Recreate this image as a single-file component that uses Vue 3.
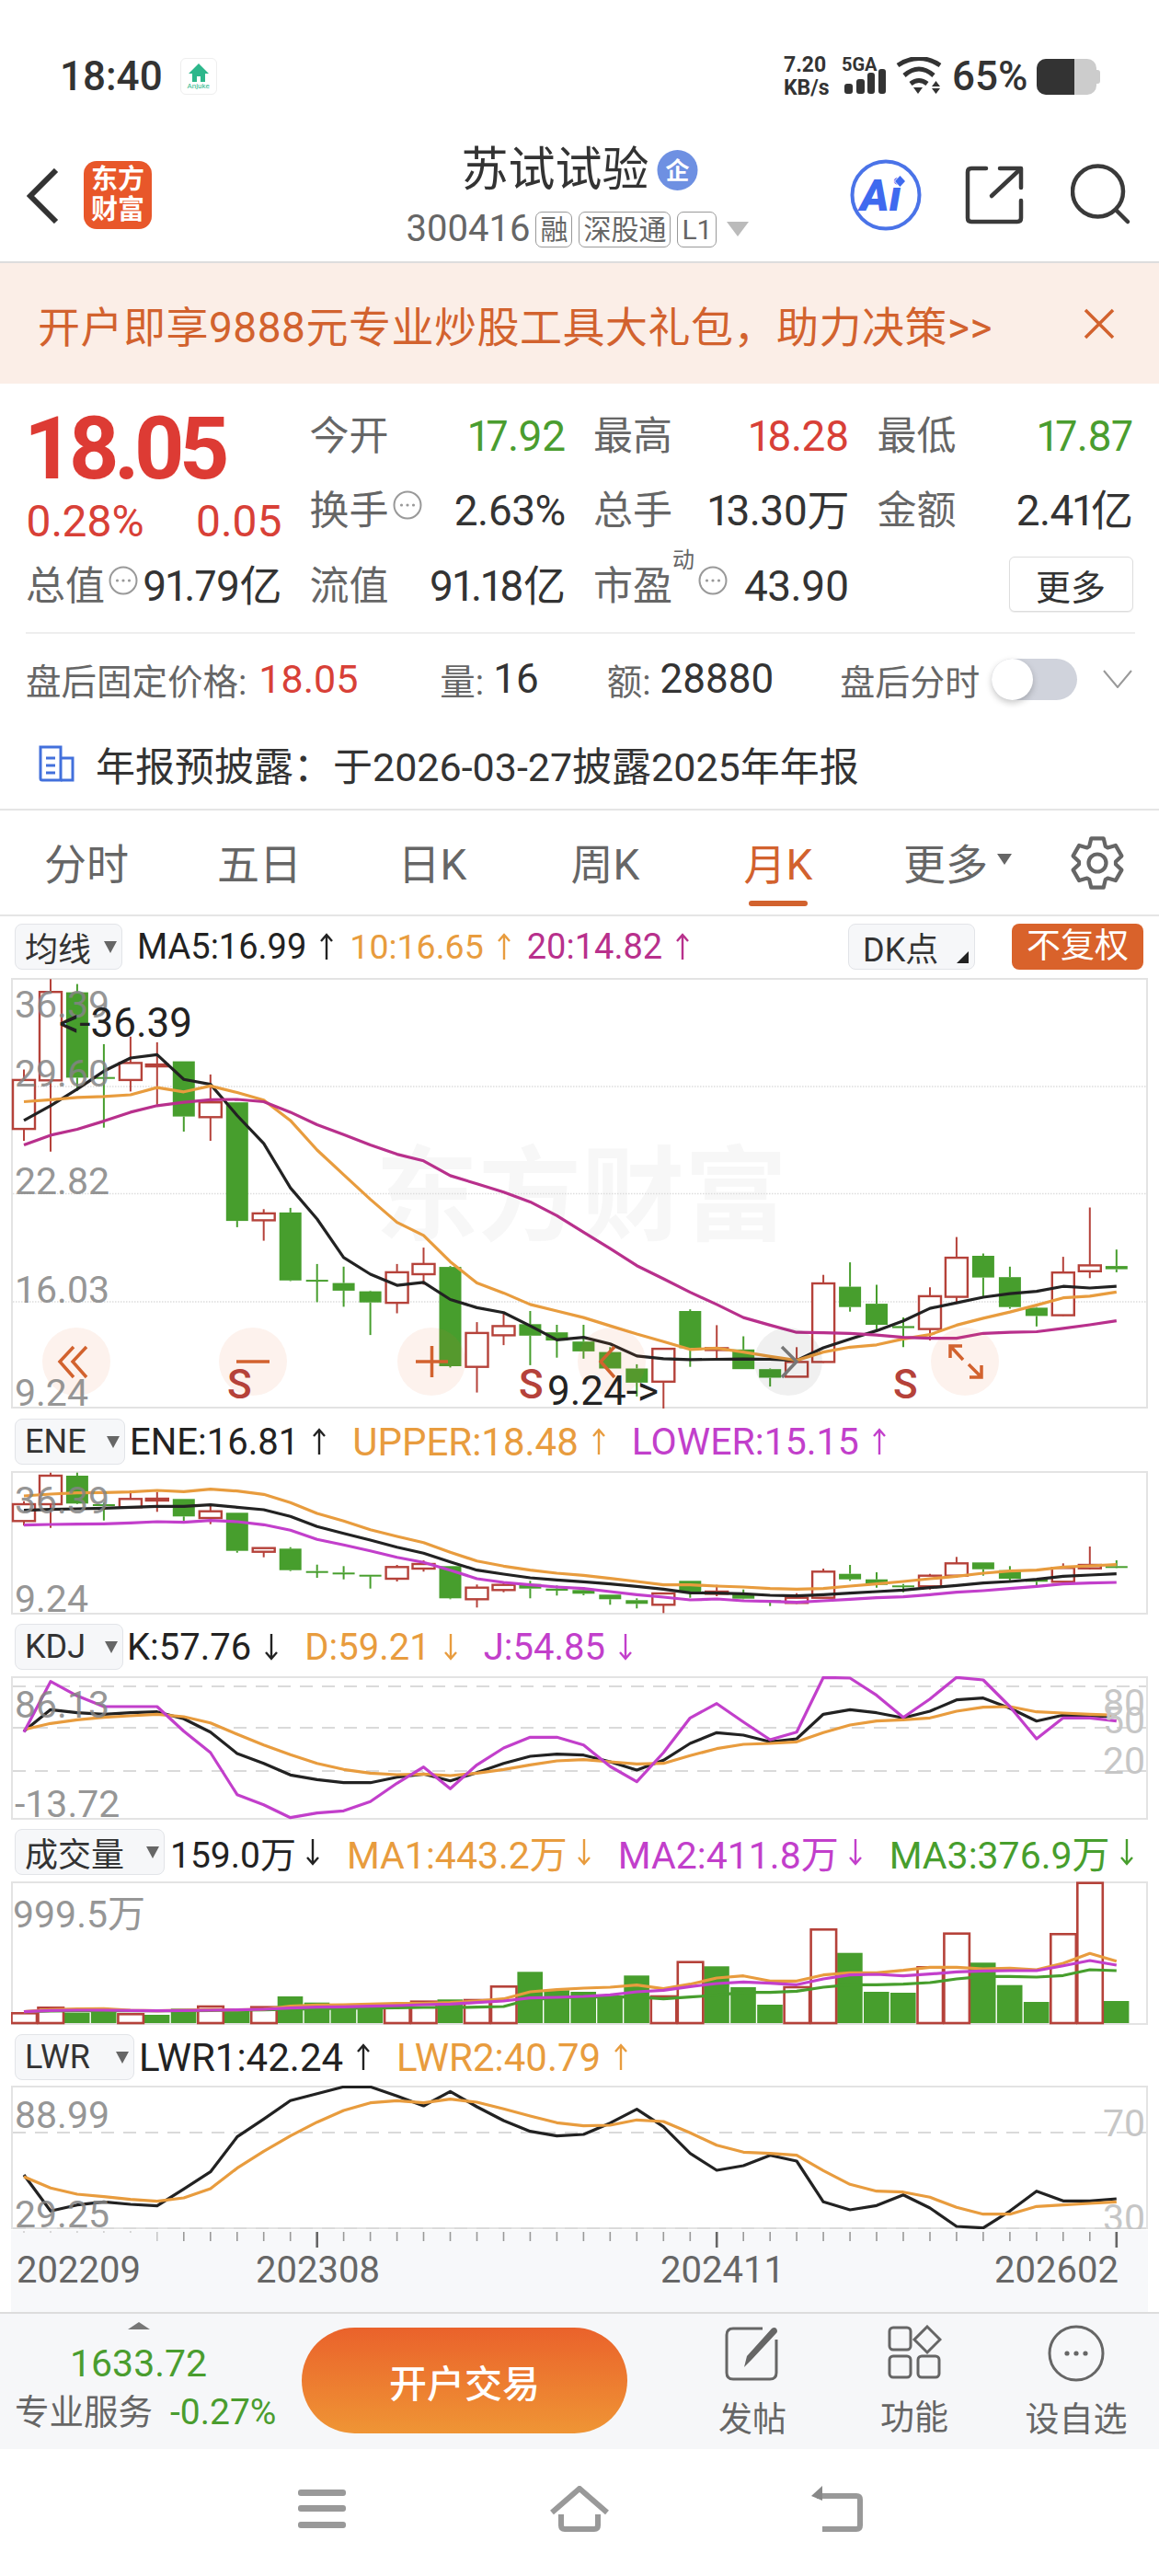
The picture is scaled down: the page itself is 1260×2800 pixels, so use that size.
<script setup>
const X = i => +(26 + 28.97 * i).toFixed(1)
const RED = '#B5423A', GREEN = '#479E2D', ORANGE = '#E89C3E', PURPLE = '#C23FCB', MAG = '#B8308C', BLACK = '#222222'
const Y = (base, sc) => z => +(base + z / sc).toFixed(1)
const pts = (arr, f) => arr.map((z, i) => `${X(i)},${f(z)}`).join(' ')

const candles = (d, f) => d.map((c, i) => {
  const [t, w1, b1, b2, w2] = c
  return { i, x: X(i), red: t === 'r', w1: f(w1), b1: f(b1), b2: f(b2), w2: f(w2), h: Math.max(f(b2) - f(b1), 2) }
})

const mainData = [
  ['r',455,487,636,672],['r',180,219,488,705],['g',195,220,480,520],['g',378,478,482,632],['r',355,435,487,522],['r',372,440,445,562],
  ['g',430,430,598,644],['r',470,555,600,672],['g',555,555,916,935],['r',880,893,914,976],['g',876,890,1097,1099],['g',1047,1095,1098,1163],
  ['g',1055,1105,1128,1177],['g',1128,1130,1164,1263],['r',1047,1072,1165,1197],['r',997,1047,1078,1110],['g',1053,1056,1358,1362],['r',1224,1257,1360,1438],
  ['r',1197,1236,1264,1294],['g',1190,1230,1265,1355],['g',1232,1255,1280,1332],['g',1232,1283,1313,1335],['g',1300,1315,1365,1365],['g',1352,1365,1408,1450],
  ['r',1305,1305,1405,1490],['g',1185,1190,1303,1360],['r',1233,1303,1306,1335],['g',1267,1307,1367,1367],['g',1365,1367,1393,1420],['r',1300,1345,1390,1390],
  ['r',1080,1106,1345,1348],['g',1042,1116,1178,1192],['g',1110,1168,1232,1250],['g',1210,1236,1242,1300],['r',1118,1145,1245,1280],['r',965,1028,1147,1165],
  ['g',1015,1022,1088,1145],['g',1055,1087,1178,1183],['g',1178,1180,1205,1237],['r',1025,1073,1203,1205],['r',875,1051,1069,1090],['g',1003,1053,1063,1072]
]
const eneData = [
  ['r',305,315,370,385],['r',212,222,315,392],['g',212,222,313,315],['g',310,315,318,368],['r',270,298,325,328],['r',275,297,303,340],
  ['g',298,298,355,370],['r',315,338,360,380],['g',343,343,467,473],['r',458,458,470,488],['g',455,460,530,533],['g',512,533,535,555],
  ['g',517,538,541,560],['g',545,545,550,590],['r',513,520,558,567],['r',498,510,525,535],['g',517,517,622,625],['r',577,587,625,652],
  ['r',568,578,595,602],['g',565,575,590,622],['g',580,590,597,613],['g',585,595,607,612],['g',610,610,625,643],['g',622,628,640,655],
  ['r',605,606,643,670],['g',565,565,600,620],['r',578,600,607,615],['g',593,607,623,625],['g',628,628,632,647],['r',605,620,637,640],
  ['r',525,535,620,622],['g',513,542,560,565],['g',537,560,578,587],['g',575,580,583,602],['r',542,548,583,593],['r',487,508,548,555],
  ['g',505,505,527,548],['g',517,530,558,563],['g',560,560,568,580],['r',508,523,568,575],['r',453,513,524,528],['g',498,517,520,523]
]
const volTop = [535,517,533,530,538,540,520,513,525,515,480,500,505,505,512,497,490,492,448,400,460,465,483,412,480,368,382,450,507,450,262,338,465,468,385,275,370,443,498,277,110,495]
const volKinds = 'rrggrgg' + 'rgr' + 'gggg' + 'rr' + 'g' + 'rr' + 'gggg' + 'g' + 'rr' + 'ggg' + 'rr' + 'ggg' + 'rr' + 'ggg' + 'rr' + 'g'

const fm = Y(1000, 2.8), f5 = Y(1530, 3), f7 = Y(2010, 3)
const t = (x, cy, text, fs = 41, c = '#848484', anchor = 'start', o = 0.85) => ({ x, y: +(cy + fs * 0.355).toFixed(1), text, fs, c, anchor, o })

const panels = [
  {
    key: 'ma', top: 1064, h: 468, overlay: true,
    box: { t: '均线', w: 117 }, lead: 16, gap: 16, ig: 13,
    items: [
      { t: 'MA5:16.99', c: '#222', up: true, fs: 38 }, { t: '10:16.65', c: ORANGE, up: true, fs: 37.5 }, { t: '20:14.82', c: MAG, up: true, fs: 38 }
    ],
    dots: [1181, 1297.5, 1415],
    cs: candles(mainData, fm),
    lines: [
      { c: BLACK, p: pts([610,565,515,460,420,410,485,500,595,680,815,910,1027,1078,1112,1103,1155,1180,1195,1235,1278,1270,1290,1327,1335,1338,1337,1336,1337,1340,1302,1275,1250,1220,1182,1165,1148,1137,1130,1115,1120,1115], fm) },
      { c: ORANGE, p: pts([553,547,540,537,532,510,523,505,525,548,610,700,775,850,920,960,1040,1105,1135,1170,1190,1210,1235,1260,1283,1307,1303,1315,1328,1340,1315,1300,1293,1275,1262,1233,1212,1193,1172,1150,1145,1132], fm) },
      { c: MAG, p: pts([685,655,637,612,585,565,555,547,546,553,585,623,653,685,713,733,778,803,828,858,900,950,1000,1052,1092,1133,1170,1210,1233,1255,1256,1258,1263,1270,1273,1273,1258,1255,1253,1243,1232,1220], fm) }
    ],
    texts: [
      t(16, 1091, '36.39'), t(16, 1166, '29.60'), t(16, 1283, '22.82'), t(16, 1401, '16.03'), t(16, 1513, '9.24'),
      t(64, 1111, '<-36.39', 44, '#222', 'start', 1), t(595, 1511, '9.24->', 44, '#222', 'start', 1)
    ]
  },
  {
    key: 'ene', top: 1600, h: 156,
    box: { t: 'ENE', w: 120 }, lead: 5, gap: 27, ig: 13,
    items: [
      { t: 'ENE:16.81', c: '#222', up: true, fs: 40 }, { t: 'UPPER:18.48', c: ORANGE, up: true, fs: 42 }, { t: 'LOWER:15.15', c: PURPLE, up: true, fs: 41 }
    ],
    cs: candles(eneData, f5),
    lines: [
      { c: ORANGE, p: pts([288,282,278,277,275,270,274,266,272,283,310,345,370,398,420,440,472,500,517,530,540,547,557,567,578,578,582,585,590,592,590,582,575,567,558,550,540,533,530,520,516,512], f5) },
      { c: BLACK, p: pts([335,332,330,328,325,322,322,317,325,333,355,388,410,432,455,475,503,530,543,555,562,568,575,583,592,604,605,607,612,614,610,605,600,595,587,580,572,567,560,550,546,542], f5) },
      { c: PURPLE, p: pts([383,381,380,379,376,372,374,368,372,382,400,430,448,467,488,505,530,558,570,578,585,590,600,610,618,627,624,630,632,635,630,625,620,617,610,602,597,590,583,575,572,570], f5) }
    ],
    texts: [t(16, 1630, '36.39'), t(16, 1737, '9.24')]
  },
  {
    key: 'kdj', top: 1823, h: 156,
    box: { t: 'KDJ', w: 118 }, lead: 4, gap: 27, ig: 13,
    items: [
      { t: 'K:57.76', c: '#222', fs: 40 }, { t: 'D:59.21', c: ORANGE, fs: 40 }, { t: 'J:54.85', c: PURPLE, fs: 40 }
    ],
    dashes: [1833, 1878, 1925],
    lines: [
      { c: BLACK, p: pts([1055,985,995,1000,995,992,1015,1058,1128,1160,1198,1213,1223,1223,1205,1195,1217,1190,1160,1137,1130,1133,1155,1182,1150,1095,1060,1068,1090,1080,1000,985,995,1012,990,953,947,980,1022,1003,1005,1008], f5) },
      { c: ORANGE, p: pts([1050,1030,1018,1010,1005,1000,1008,1028,1065,1100,1132,1160,1180,1192,1197,1195,1200,1192,1180,1165,1152,1148,1155,1162,1160,1135,1112,1098,1095,1090,1060,1035,1022,1018,1012,990,977,975,992,996,1000,1003], f5) },
      { c: PURPLE, p: pts([1058,893,940,975,975,975,1055,1125,1262,1295,1337,1322,1315,1285,1225,1172,1243,1165,1110,1075,1075,1100,1170,1220,1125,1012,965,1025,1083,1058,880,882,938,1010,950,880,888,975,1080,1012,1012,1022], f5) }
    ],
    texts: [
      t(16, 1852, '86.13'), t(16, 1960, '-13.72'),
      t(1245, 1850, '80', 41, '#c6c6c6', 'end', 1), t(1245, 1869, '50', 41, '#c6c6c6', 'end', 1), t(1245, 1913, '20', 41, '#c6c6c6', 'end', 1)
    ]
  },
  {
    key: 'vol', top: 2046, h: 156,
    box: { t: '成交量', w: 163 }, lead: 6, gap: 28, ig: 9,
    items: [
      { t: '159.0万', c: '#222', fs: 39 }, { t: 'MA1:443.2万', c: ORANGE, fs: 41 }, { t: 'MA2:411.8万', c: PURPLE, fs: 41 }, { t: 'MA3:376.9万', c: GREEN, fs: 41 }
    ],
    bars: volTop.map((z, i) => ({ x: X(i), y: f7(z), h: 2199 - f7(z), red: volKinds[i] === 'r' })),
    lines: [
      { c: GREEN, p: pts([530,528,527,527,527,527,527,526,525,524,522,520,519,518,517,516,516,515,513,490,485,482,482,482,488,482,476,467,467,463,450,442,442,440,435,423,415,415,417,412,393,396], f7) },
      { c: ORANGE, p: pts([530,523,521,520,525,527,525,523,524,522,512,508,507,505,503,503,500,495,488,465,458,453,450,443,455,440,420,413,430,430,410,403,403,395,385,385,390,388,393,372,340,365], f7) },
      { c: PURPLE, p: pts([530,526,525,525,526,527,526,525,524,522,518,515,514,512,510,507,505,500,495,485,483,480,475,465,460,448,438,433,437,442,423,410,408,413,407,400,397,396,396,380,363,378], f7) }
    ],
    texts: [t(14, 2080, '999.5万')]
  },
  {
    key: 'lwr', top: 2268, h: 156,
    box: { t: 'LWR', w: 130 }, lead: 5, gap: 27, ig: 13,
    items: [
      { t: 'LWR1:42.24', c: '#222', up: true, fs: 42 }, { t: 'LWR2:40.79', c: ORANGE, up: true, fs: 42 }
    ],
    dashes: [2318, 2422],
    lines: [
      { c: BLACK, p: pts([1062,1180,1160,1150,1158,1163,1108,1052,938,880,820,797,775,775,805,837,790,840,885,920,935,930,893,848,905,992,1047,1032,998,1017,1150,1176,1162,1127,1170,1230,1235,1180,1115,1147,1147,1140], f7) },
      { c: ORANGE, p: pts([1068,1105,1125,1133,1142,1148,1137,1107,1040,985,935,890,852,827,820,827,815,825,847,870,892,902,900,883,888,925,965,988,992,998,1048,1093,1115,1118,1135,1168,1190,1190,1165,1160,1155,1150], f7) }
    ],
    texts: [
      t(16, 2298, '88.99'), t(16, 2406, '29.25'),
      t(1245, 2307, '70', 41, '#c6c6c6', 'end', 1), t(1245, 2410, '30', 41, '#c6c6c6', 'end', 1)
    ]
  }
]

const ticks = Array.from({ length: 42 }, (_, i) => ({
  x: X(i), major: i === 11 || i === 26 || i === 41, faint: i < 5, mid: i === 5
}))
const axisLabels = [
  { x: 18, t: '202209' }, { x: 278, t: '202308' }, { x: 718, t: '202411' }, { x: 1081, t: '202602' }
]
const tabs = ['分时', '五日', '日K', '周K', '月K', '更多']

const gearPath = (() => {
  const pol = (deg, r) => {
    const a = deg * Math.PI / 180
    return `${(30 + r * Math.cos(a)).toFixed(1)} ${(30 + r * Math.sin(a)).toFixed(1)}`
  }
  let d = ''
  for (let k = 0; k < 6; k++) {
    const a = -90 + 60 * k
    d += `${k ? 'L' : 'M'}${pol(a - 26, 20)} L${pol(a - 14, 27.5)} L${pol(a + 14, 27.5)} L${pol(a + 26, 20)} `
  }
  return d + 'Z'
})()
</script>

<template>
  <div class="page">
    <div class="status">
      <div class="st-left">
        <span class="time">18:40</span>
        <div class="anjuke">
          <svg width="22" height="20" viewBox="0 0 22 20"><path d="M11 0 L22 11 H18 V20 H13 V14 H9 V20 H4 V11 H0 Z" fill="#2DB78B"/></svg>
          <span class="anjuke-t">Anjuke</span>
        </div>
      </div>
      <div class="st-right">
        <div class="speed"><span>7.20</span><span>KB/s</span></div>
        <svg width="48" height="42" viewBox="0 0 48 42" class="sig">
          <text x="0" y="15" font-size="20" font-weight="700" fill="#333" font-family="Roboto">5GA</text>
          <rect x="3" y="29" width="9" height="11" rx="3" fill="#333"/>
          <rect x="16" y="24" width="9" height="16" rx="3" fill="#333"/>
          <rect x="28" y="17" width="8" height="23" rx="3" fill="#333"/>
          <rect x="40" y="13" width="8" height="27" rx="3" fill="#333"/>
        </svg>
        <svg width="50" height="42" viewBox="0 0 50 42" class="wifi">
          <path d="M2 9 Q25 -6 48 9" fill="none" stroke="#333" stroke-width="5"/>
          <path d="M9 20 Q25 6 41 20" fill="none" stroke="#333" stroke-width="5"/>
          <path d="M16 29 Q25 22 34 29" fill="none" stroke="#333" stroke-width="5"/>
          <path d="M19 33 h10 l-5 7 z" fill="#333"/>
          <path d="M39 32 l4.5 -6 4.5 6 z M39 34 l4.5 6 4.5 -6 z" fill="#333"/>
        </svg>
        <span class="pct">65%</span>
        <div class="batt"><div class="batt-in"></div><div class="batt-nub"></div></div>
      </div>
    </div>

    <div class="nav">
      <div class="nav-l">
        <svg class="back" width="36" height="60" viewBox="0 0 36 60"><path d="M32 2 L4 30 L32 58" fill="none" stroke="#333" stroke-width="6"/></svg>
        <div class="logo"><span>东方</span><span>财富</span></div>
      </div>
      <div class="nav-c">
        <div class="title-row">
          <span class="title">苏试试验</span>
          <svg width="45" height="44" viewBox="0 0 45 44">
            <circle cx="22.5" cy="22" r="22" fill="#6E90E2"/>
            <text x="22.5" y="32" text-anchor="middle" font-size="26" font-weight="700" fill="#fff" font-family="Noto Sans CJK SC">企</text>
          </svg>
        </div>
        <div class="code-row">
          <span class="code">300416</span>
          <span class="tag">融</span><span class="tag">深股通</span><span class="tag">L1</span>
          <i class="code-tri"></i>
        </div>
      </div>
      <div class="nav-r">
        <svg width="80" height="80" viewBox="0 0 80 80">
          <circle cx="40" cy="40" r="36.5" fill="none" stroke="#4A73E8" stroke-width="4"/>
          <text x="12" y="57" font-size="48" font-weight="900" font-style="italic" fill="#3F6AEF" font-family="Roboto">Ai</text>
          <path d="M55.5 18 L62 25 L55.5 32 L49 25 Z" fill="#fff"/>
          <path d="M55.5 19 L61 25 L55.5 31 L50 25 Z" fill="#3F6AEF"/>
        </svg>
        <svg width="64" height="64" viewBox="0 0 64 64" class="ic-share" fill="none" stroke="#3A3A3A" stroke-width="4.5" stroke-linecap="round" stroke-linejoin="round">
          <path d="M23 3 H7 Q3 3 3 7 V57 Q3 61 7 61 H57 Q61 61 61 57 V38"/>
          <path d="M38 3 H61 V24"/>
          <path d="M29 33 L60 4"/>
        </svg>
        <svg width="66" height="70" viewBox="0 0 66 70" class="ic-search" fill="none" stroke="#3A3A3A" stroke-width="4.5" stroke-linecap="round">
          <circle cx="29.5" cy="32" r="27.5"/>
          <path d="M49 52 L62 65"/>
        </svg>
      </div>
    </div>

    <div class="banner">
      <span>开户即享9888元专业炒股工具大礼包，助力决策&gt;&gt;</span>
      <svg width="34" height="34" viewBox="0 0 34 34"><path d="M2 2 L32 32 M32 2 L2 32" stroke="#D2622E" stroke-width="3.5" fill="none"/></svg>
    </div>

    <div class="quote">
      <div class="price-cell">
        <div class="price">18.05</div>
        <div class="change"><span>0.28%</span><span>0.05</span></div>
      </div>
      <div class="cell"><span class="lb">今开</span><span class="v green">17.92</span></div>
      <div class="cell"><span class="lb">最高</span><span class="v red">18.28</span></div>
      <div class="cell"><span class="lb">最低</span><span class="v green">17.87</span></div>
      <div class="cell">
        <span class="lb">换手<svg class="inf" width="32" height="32" viewBox="0 0 32 32"><circle cx="16" cy="16" r="14.5" fill="none" stroke="#999" stroke-width="2"/><circle cx="9.5" cy="16" r="1.6" fill="#999"/><circle cx="16" cy="16" r="1.6" fill="#999"/><circle cx="22.5" cy="16" r="1.6" fill="#999"/></svg></span>
        <span class="v">2.63%</span>
      </div>
      <div class="cell"><span class="lb">总手</span><span class="v">13.30万</span></div>
      <div class="cell"><span class="lb">金额</span><span class="v">2.41亿</span></div>
      <div class="cell">
        <span class="lb">总值<svg class="inf" width="32" height="32" viewBox="0 0 32 32"><circle cx="16" cy="16" r="14.5" fill="none" stroke="#999" stroke-width="2"/><circle cx="9.5" cy="16" r="1.6" fill="#999"/><circle cx="16" cy="16" r="1.6" fill="#999"/><circle cx="22.5" cy="16" r="1.6" fill="#999"/></svg></span>
        <span class="v">91.79亿</span>
      </div>
      <div class="cell"><span class="lb">流值</span><span class="v">91.18亿</span></div>
      <div class="cell">
        <span class="lb">市盈<sup class="dyn">动</sup><svg class="inf" width="32" height="32" viewBox="0 0 32 32"><circle cx="16" cy="16" r="14.5" fill="none" stroke="#999" stroke-width="2"/><circle cx="9.5" cy="16" r="1.6" fill="#999"/><circle cx="16" cy="16" r="1.6" fill="#999"/><circle cx="22.5" cy="16" r="1.6" fill="#999"/></svg></span>
        <span class="v">43.90</span>
      </div>
      <div class="cell end"><button class="more">更多</button></div>
    </div>

    <div class="post">
      <span class="p-lb">盘后固定价格:</span><span class="p-red">18.05</span>
      <span class="p-lb m1">量:</span><span class="p-v">16</span>
      <span class="p-lb m2">额:</span><span class="p-v">28880</span>
      <span class="p-lb m3">盘后分时</span>
      <span class="toggle"><i></i></span>
      <svg class="p-chev" width="32" height="20" viewBox="0 0 32 20"><path d="M1 1 L16 19 L31 1" fill="none" stroke="#999" stroke-width="2"/></svg>
    </div>

    <div class="ann">
      <svg width="40" height="40" viewBox="0 0 40 40">
        <path d="M2 2 H24 V38 H4 Q2 38 2 36 Z" fill="none" stroke="#4270DC" stroke-width="3"/>
        <path d="M24 14 H37 V38 H24" fill="none" stroke="#4270DC" stroke-width="3"/>
        <path d="M8 14 H18 M8 22 H18 M8 30 H18" stroke="#4270DC" stroke-width="3"/>
      </svg>
      <span>年报预披露：于2026-03-27披露2025年年报</span>
    </div>

    <div class="tabs">
      <div v-for="(tb, i) in tabs" :key="tb" class="tab" :class="{ on: i === 4, last: i === 5 }">
        {{ tb }}<i v-if="i === 5" class="tab-tri"></i>
      </div>
      <svg class="gear" width="60" height="60" viewBox="0 0 60 60" fill="none" stroke="#666" stroke-width="4.2" stroke-linejoin="round">
        <circle cx="30" cy="30" r="9.5"/>
        <path :d="gearPath"/>
      </svg>
    </div>

    <div class="charts">
      <div v-for="p in panels" :key="p.key" class="section">
        <div class="tbar">
          <div class="selbox" :style="{ width: p.box.w + 'px' }"><span>{{ p.box.t }}</span><i class="sel-tri"></i></div>
          <div class="items" :style="{ marginLeft: p.lead + 'px', gap: p.gap + 'px' }">
            <div v-for="it in p.items" :key="it.t" class="item" :style="{ color: it.c, fontSize: it.fs + 'px', gap: p.ig + 'px' }">
              <span>{{ it.t }}</span>
              <svg width="18" height="32" viewBox="0 0 18 32" fill="none" stroke="currentColor" stroke-width="2.4">
                <path v-if="it.up" d="M9 30 V3 M3 10 L9 3 L15 10"/>
                <path v-else d="M9 2 V29 M3 22 L9 29 L15 22"/>
              </svg>
            </div>
          </div>
          <template v-if="p.overlay">
            <div class="dk"><span>DK点</span><i class="dk-tri"></i></div>
            <div class="fq">不复权</div>
          </template>
        </div>
        <svg class="plot" width="1236" :height="p.h" :viewBox="`12 ${p.top - 1} 1236 ${p.h}`">
          <rect x="13" :y="p.top" width="1234" :height="p.h - 2" fill="#fff" stroke="#E3E3E3" stroke-width="2"/>
          <text v-if="p.overlay" x="408" y="1340" font-size="112" font-weight="700" fill="#F7F7F7" class="tx">东方财富</text>
          <line v-for="y in p.dots || []" :key="'d' + y" x1="14" x2="1246" :y1="y" :y2="y" stroke="#DDD" stroke-width="1.5" stroke-dasharray="1.5 1.5"/>
          <line v-for="y in p.dashes || []" :key="'s' + y" x1="14" x2="1246" :y1="y" :y2="y" stroke="#DADADA" stroke-width="2" stroke-dasharray="14 10"/>
          <g v-for="b in p.bars || []" :key="'b' + b.x">
            <rect v-if="!b.red" :x="b.x - 14" :y="b.y" width="27.6" :height="b.h" :fill="GREEN"/>
          </g>
          <g v-for="b in p.bars || []" :key="'r' + b.x">
            <rect v-if="b.red" :x="b.x - 13.5" :y="b.y" width="27.5" :height="b.h" fill="#fff" :stroke="RED" stroke-width="2.6"/>
          </g>
          <g v-for="c in p.cs || []" :key="c.i">
            <line :x1="c.x" :x2="c.x" :y1="c.w1" :y2="c.b1" :stroke="c.red ? RED : GREEN" stroke-width="2"/>
            <line :x1="c.x" :x2="c.x" :y1="c.b2" :y2="c.w2" :stroke="c.red ? RED : GREEN" stroke-width="2"/>
            <rect v-if="c.red" :x="c.x - 12" :y="c.b1" width="24" :height="c.h" fill="#fff" :stroke="RED" stroke-width="2.4"/>
            <rect v-else :x="c.x - 12" :y="c.b1" width="24" :height="c.h" :fill="GREEN"/>
          </g>
          <polyline v-for="l in p.lines" :key="l.c" :points="l.p" fill="none" :stroke="l.c" stroke-width="3.2" stroke-linejoin="round"/>
          <g v-if="p.overlay">
            <circle cx="83" cy="1480" r="37" fill="#E8703A" fill-opacity=".09"/>
            <circle cx="275" cy="1480" r="37" fill="#E8703A" fill-opacity=".09"/>
            <circle cx="469" cy="1480" r="37" fill="#E8703A" fill-opacity=".09"/>
            <circle cx="665" cy="1480" r="37" fill="#E8703A" fill-opacity=".09"/>
            <circle cx="857" cy="1480" r="37" fill="#000" fill-opacity=".06"/>
            <circle cx="1049" cy="1480" r="37" fill="#E8703A" fill-opacity=".09"/>
            <path d="M80 1464 L65 1480 L80 1497 M94 1464 L79 1480 L94 1497" fill="none" stroke="#D2622E" stroke-width="3.5"/>
            <path d="M257 1480 H293" stroke="#D2622E" stroke-width="3.5"/>
            <path d="M452 1480 H487 M469.5 1463 V1497" stroke="#D2622E" stroke-width="3.5"/>
            <path d="M668 1464 L653 1480 L668 1497" fill="none" stroke="#D2622E" stroke-width="3.5"/>
            <path d="M850 1464 L866 1480 L850 1497" fill="none" stroke="#777" stroke-width="3.5"/>
            <path d="M1047 1478 L1034 1464 M1033 1476 V1463 H1046 M1053 1483 L1067 1497 M1067 1484 V1497 H1054" fill="none" stroke="#D2622E" stroke-width="3.5"/>
            <text x="247" y="1520" font-size="44" font-weight="500" :fill="RED" class="tx">S</text>
            <text x="564" y="1520" font-size="44" font-weight="500" :fill="RED" class="tx">S</text>
            <text x="971" y="1520" font-size="44" font-weight="500" :fill="RED" class="tx">S</text>
          </g>
          <text v-for="x in p.texts" :key="x.text + x.x + x.y" :x="x.x" :y="x.y" :font-size="x.fs" :fill="x.c" :text-anchor="x.anchor" :opacity="x.o" class="tx">{{ x.text }}</text>
        </svg>
      </div>
      <svg class="axis" width="1236" height="89" viewBox="12 2424 1236 89">
        <g v-for="k in ticks" :key="k.x">
          <line v-if="!k.faint" :x1="k.x" :x2="k.x" y1="2426" :y2="k.major ? 2443 : 2436" :stroke="k.major ? '#666' : '#999'" :stroke-width="k.major ? 2.6 : 1.6" :opacity="k.mid ? 0.5 : 1"/>
          <line v-else :x1="k.x" :x2="k.x" y1="2425" y2="2427" stroke="#ccc" stroke-width="1.5"/>
        </g>
        <text v-for="a in axisLabels" :key="a.t" :x="a.x" y="2481" font-size="40" fill="#666" class="tx">{{ a.t }}</text>
      </svg>
    </div>

    <div class="bottom">
      <div class="idx">
        <i class="idx-tri"></i>
        <div class="idx-num">1633.72</div>
        <div class="idx-row"><span class="idx-lb">专业服务</span><span class="idx-pct">-0.27%</span></div>
      </div>
      <div class="trade">开户交易</div>
      <div class="acts">
        <div class="act">
          <svg width="62" height="62" viewBox="0 0 62 62" fill="none" stroke="#666" stroke-width="3">
            <path d="M42 4 H10 Q3 4 3 11 V52 Q3 59 10 59 H50 Q57 59 57 52 V16"/>
            <path d="M22 46 L25 34 L52 4 Q55 2 57 4 Q59 7 57 9 L30 38 Z" fill="#666" stroke="none"/>
          </svg>
          <span>发帖</span>
        </div>
        <div class="act">
          <svg width="60" height="60" viewBox="0 0 60 60" fill="none" stroke="#666" stroke-width="3">
            <rect x="3" y="3" width="23" height="24" rx="4"/>
            <path d="M44 2 L58 16 L44 30 L30 16 Z"/>
            <rect x="3" y="34" width="23" height="23" rx="4"/>
            <rect x="34" y="34" width="23" height="23" rx="4"/>
          </svg>
          <span>功能</span>
        </div>
        <div class="act">
          <svg width="62" height="62" viewBox="0 0 62 62" fill="none" stroke="#666" stroke-width="3">
            <circle cx="31" cy="31" r="29"/>
            <circle cx="21" cy="31" r="2.6" fill="#666" stroke="none"/><circle cx="31" cy="31" r="2.6" fill="#666" stroke="none"/><circle cx="41" cy="31" r="2.6" fill="#666" stroke="none"/>
          </svg>
          <span>设自选</span>
        </div>
      </div>
    </div>

    <div class="sysnav">
      <svg class="n1" width="52" height="42" viewBox="0 0 52 42"><rect y="0" width="52" height="7" rx="3" fill="#999"/><rect y="17" width="52" height="7" rx="3" fill="#999"/><rect y="35" width="52" height="7" rx="3" fill="#999"/></svg>
      <svg class="n2" width="66" height="50" viewBox="0 0 66 50" fill="none" stroke="#999" stroke-width="6"><path d="M3 29 L33 3 L63 29"/><path d="M13 31 V43 Q13 47 17 47 H49 Q53 47 53 43 V31"/></svg>
      <svg class="n3" width="56" height="50" viewBox="0 0 56 50" fill="none" stroke="#999" stroke-width="6"><path d="M6 11 H49 Q53 11 53 15 V43 Q53 47 49 47 H12"/><path d="M0 11 L12 0 V16 Z" fill="#888" stroke="none"/></svg>
    </div>
  </div>
</template>

<style scoped>
.page { width: 1260px; height: 2800px; background: #fff; font-family: Roboto, "Noto Sans CJK SC", sans-serif; color: #222; overflow: hidden; }
i { display: block; font-style: normal; }

.status { height: 164px; padding-top: 2px; box-sizing: border-box; display: flex; justify-content: space-between; align-items: center; }
.st-left { display: flex; align-items: center; margin-left: 65px; gap: 19px; }
.time { font-size: 44px; color: #333; font-weight: 500; line-height: 50px; }
.anjuke { width: 38px; height: 38px; border: 1px solid #eee; border-radius: 6px; display: flex; flex-direction: column; align-items: center; justify-content: center; }
.anjuke-t { font-size: 8px; line-height: 9px; color: #2DB78B; }
.st-right { display: flex; align-items: center; margin-right: 68px; }
.speed { display: flex; flex-direction: column; font-size: 23px; font-weight: 700; line-height: 25px; color: #333; width: 48px; margin-right: 15px; text-align: left; white-space: nowrap; }
.sig { margin-right: 11px; }
.wifi { margin-right: 11px; }
.pct { font-size: 44px; color: #333; font-weight: 500; margin-right: 11px; width: 81px; white-space: nowrap; }
.batt { width: 65px; height: 39px; border-radius: 10px; background: #ccc; position: relative; }
.batt-in { width: 41px; height: 39px; background: #333; border-radius: 10px 0 0 10px; }
.batt-nub { position: absolute; right: -4px; top: 12px; width: 4px; height: 15px; background: #ccc; border-radius: 0 3px 3px 0; }

.nav { height: 120px; display: grid; grid-template-columns: 1fr auto 1fr; border-bottom: 2px solid #ddd; }
.nav-l { display: flex; align-items: flex-start; }
.back { margin: 19px 0 0 29px; }
.logo { width: 74px; height: 74px; margin: 11px 0 0 26px; background: #E8572A; border-radius: 14px; color: #fff; font-weight: 700; font-size: 29px; line-height: 33px; display: flex; flex-direction: column; align-items: center; justify-content: center; }
.nav-c { display: flex; flex-direction: column; align-items: center; }
.title-row { height: 60px; display: flex; align-items: center; gap: 8px; margin-top: -9px; }
.title { font-size: 51px; line-height: 60px; color: #333; }
.code-row { display: flex; align-items: center; height: 40px; margin: 14px 0 0 -4px; gap: 7px; }
.code { font-size: 40px; color: #666; margin-right: -1px; line-height: 40px; }
.tag { border: 1.5px solid #999; border-radius: 7px; height: 39px; line-height: 37px; font-size: 30px; color: #666; padding: 0 4px; box-sizing: border-box; }
.code-tri { width: 0; height: 0; border-left: 12px solid transparent; border-right: 12px solid transparent; border-top: 16px solid #BBB; margin-left: 4px; }
.nav-r { display: flex; justify-content: flex-end; align-items: flex-start; padding: 8px 30px 0 0; }
.ic-share { margin: 8px 0 0 46px; }
.ic-search { margin: 4px 0 0 51px; }

.banner { height: 131px; background: #FBEEE7; color: #D2622E; font-size: 46px; letter-spacing: .5px; display: flex; justify-content: space-between; align-items: center; padding: 0 48px 0 41px; }

.quote { margin: 0 26px 0 28px; padding-top: 16px; height: 272px; box-sizing: border-box; display: grid; grid-template-columns: repeat(4, 278px); column-gap: 30.5px; grid-auto-rows: 81.5px; border-bottom: 2px solid #eee; }
.price-cell { grid-row: 1 / 3; display: flex; flex-direction: column; }
.price { font-size: 95px; line-height: 100px; margin: 5px 0 0 -2px; font-weight: 700; color: #DD3B34; letter-spacing: -5.5px; }
.change { height: 58px; display: flex; justify-content: space-between; align-items: center; font-size: 48px; color: #D84037; line-height: 58px; font-variant-numeric: proportional-nums; letter-spacing: -.5px; }
.cell { display: flex; justify-content: space-between; align-items: center; white-space: nowrap; }
.cell.end { justify-content: flex-end; }
.lb { font-size: 43px; color: #666; display: flex; align-items: flex-start; position: relative; line-height: 50px; }
.v { font-size: 46px; color: #333; line-height: 50px; font-variant-numeric: proportional-nums; letter-spacing: -.6px; }
.green { color: #4A9D2F; }
.red { color: #D84037; }
.inf { margin: 3px 0 0 4px; }
.dyn { font-size: 24px; line-height: 26px; color: #666; position: relative; top: -16px; }
.more { width: 135px; height: 60px; margin-top: -3px; background: #fff; border: 1.5px solid #ddd; border-radius: 6px; font-size: 38px; color: #333; font-family: inherit; padding: 0; box-shadow: 0 1px 1px #eee; }

.post { margin: 0 0 0 28px; height: 98px; display: flex; align-items: center; font-size: 38.5px; white-space: nowrap; }
.p-lb { color: #666; }
.p-red { color: #D84037; margin-left: 13px; font-size: 43px; }
.p-v { color: #333; margin-left: 10px; font-size: 44px; }
.m1 { margin-left: 89px; }
.m2 { margin-left: 74px; }
.m3 { margin-left: 72px; font-size: 38px; }
.toggle { width: 93px; height: 45px; margin-left: 13px; border-radius: 23px; background: #D0D3DC; display: block; }
.toggle i { width: 45px; height: 45px; border-radius: 50%; background: #fff; box-shadow: 0 3px 7px rgba(0,0,0,.22); }
.p-chev { margin-left: 28px; }

.ann { height: 94px; padding: 0 0 6px 42px; box-sizing: border-box; display: flex; align-items: center; gap: 22px; font-size: 43px; color: #333; border-bottom: 2px solid #E5E5E5; }

.tabs { height: 115px; display: flex; align-items: center; padding-top: 4px; box-sizing: border-box; border-bottom: 2px solid #E5E5E5; }
.tab { width: 188px; box-sizing: border-box; text-align: center; font-size: 46px; color: #666; position: relative; display: flex; justify-content: center; align-items: center; line-height: 60px; }
.tab.last { padding-left: 14px; }
.tab.on { color: #D2622E; }
.tab.on::after { content: ""; position: absolute; left: 62px; width: 64px; height: 6px; border-radius: 3px; background: #D2622E; top: 69px; }
.tab-tri { width: 0; height: 0; border-left: 8px solid transparent; border-right: 8px solid transparent; border-top: 12px solid #666; margin: -12px 0 0 10px; }
.gear { margin: -4px 0 0 35px; }

.charts { padding-top: 8px; }
.section { margin-bottom: 10px; }
.section:first-child { margin-bottom: 11px; }
.section:first-child .tbar { margin-bottom: 9px; }
.section:last-of-type .tbar { margin-bottom: 6px; }
.tbar { height: 50px; margin: 0 0 7px 16px; display: flex; align-items: center; font-size: 38px; white-space: nowrap; position: relative; }
.selbox { height: 50px; box-sizing: border-box; border: 1.5px solid #E2E4E8; border-radius: 8px; background: #F6F7F9; padding: 0 5px 0 10px; display: flex; justify-content: space-between; align-items: center; font-size: 36px; color: #333; }
.sel-tri { width: 0; height: 0; border-left: 7.5px solid transparent; border-right: 7.5px solid transparent; border-top: 13px solid #666; }
.items { display: flex; align-items: center; }
.item { display: flex; align-items: center; }
.dk { margin-left: auto; width: 138px; height: 50px; box-sizing: border-box; border: 1.5px solid #E2E4E8; border-radius: 8px; background: #F6F7F9; font-size: 36px; color: #333; display: flex; align-items: center; padding-left: 15px; position: relative; }
.dk-tri { position: absolute; right: 6px; bottom: 6px; width: 0; height: 0; border-left: 13px solid transparent; border-bottom: 13px solid #222; }
.fq { margin: 0 17px 0 40px; width: 143px; height: 50px; background: #D9622B; color: #fff; border-radius: 8px; font-size: 37px; text-align: center; line-height: 50px; }
.plot, .axis { display: block; margin-left: 12px; }
.tx { font-family: Roboto, "Noto Sans CJK SC", sans-serif; }
.axis { background: #F7F8FA; margin-top: -9px; }

.bottom { height: 149px; box-sizing: border-box; border-top: 2px solid #DDD; background: #F6F7F9; display: flex; }
.idx { width: 328px; flex: none; display: flex; flex-direction: column; align-items: flex-start; padding: 9px 0 0 16px; box-sizing: border-box; }
.idx-tri { width: 0; height: 0; border-left: 12px solid transparent; border-right: 12px solid transparent; border-bottom: 8px solid #777; margin-left: 123px; }
.idx-num { font-size: 41px; color: #4A9D2F; line-height: 46px; margin: 14px 0 0 60px; }
.idx-row { display: flex; align-items: center; gap: 19px; margin-top: 7px; line-height: 46px; white-space: nowrap; }
.idx-lb { font-size: 37.5px; color: #666; }
.idx-pct { font-size: 39px; color: #4A9D2F; }
.trade { width: 354px; height: 115px; margin-top: 15px; border-radius: 58px; background: linear-gradient(180deg, #EA622B, #EF9535); color: #fff; font-size: 41px; font-weight: 500; display: flex; align-items: center; justify-content: center; }
.acts { display: flex; margin-left: 48px; padding-top: 12px; }
.act { width: 176px; display: flex; flex-direction: column; align-items: center; color: #666; font-size: 37px; line-height: 44px; }
.act span { margin-top: 20px; }

.sysnav { height: 138px; background: #fff; position: relative; display: flex; align-items: flex-start; padding-top: 40px; box-sizing: border-box; }
.n1 { margin: 4px 0 0 324px; }
.n2 { margin: 0 0 0 221px; }
.n3 { margin: 0 0 0 219px; }
</style>

<style>
html, body { margin: 0; padding: 0; background: #fff; }
</style>
